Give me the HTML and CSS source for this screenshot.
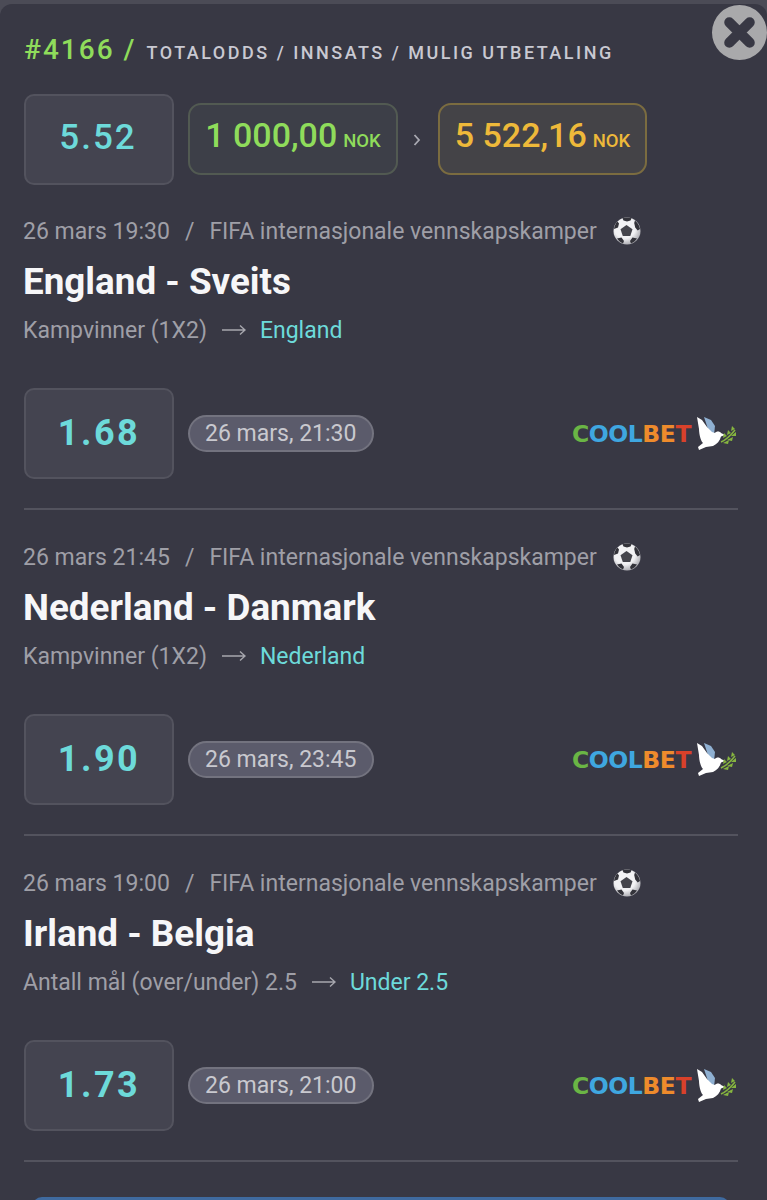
FILE: index.html
```html
<!DOCTYPE html>
<html lang="en">
<head>
    <meta charset="UTF-8">
    <meta name="viewport" content="width=device-width, initial-scale=1.0">
    <title>Kupong #4166</title>
    <link rel="stylesheet" href="styles.css">
</head>
<body>
    <svg class="defs" width="0" height="0">
        <defs>
            <radialGradient id="ball-shade" cx="42%" cy="38%" r="65%">
                <stop offset="0.600" stop-color="#f2f2f4"/>
                <stop offset="1" stop-color="#a8a8ae"/>
            </radialGradient>
            <symbol id="ball" viewBox="0 0 28 28">
                <circle cx="14" cy="14" r="13.500" fill="url(#ball-shade)"/>
                <path d="M13.500 8l6 4.200-2.200 6.800h-7.500l-2.300-6.800z" fill="#45454c"/>
                <path d="M9.500 1.200c3-.9 6-.9 9 0l-1 2.300-3.500 1-3.500-1zM22 3.500c2.500 2 4.500 5 5 8.500l-2.300 1.500-2.500-3-1-4.500zM24 21.500c-1.500 2.300-3.500 4-6 5l-1-2.500 2.500-3.500zM4 21.500c1.500 2.300 3.500 4 6 5l1-2.500-2.500-3.500zM1 12c.3-3 1.500-5.500 3.500-7.500l1.500 2-1 4z" fill="#33333a"/>
            </symbol>
            <symbol id="dove" viewBox="0 0 40 34">
                <path d="M8 0l7 3 4 6-1 9-6-6z" fill="#8fb0d2"/>
                <path d="M1 0l5 3 5 7 5 5 3 1c1-2 5-2 6 0l4 2-4 1.500c-1 4.500-4 7.500-8 9.500l-7 1-7 3-1-3 5-4c-3-3-4-11-4-14z" fill="#fff"/>
                <path d="M25 25c5-2 10-7 14-12" stroke="#86b53f" stroke-width="1.500" fill="none"/>
                <path d="M27 21l1-5 3 3zM31 18l1-5 3 3zM35 14l1-5 3 3zM27 26l6-3-1 4zM31 23l6-3-1 4zM35 19l5-4v4z" fill="#86b53f"/>
            </symbol>
            <symbol id="long-arrow" viewBox="0 0 24 12">
                <path d="M0 6h23M18 1.500L23 6l-5 4.500" fill="none" stroke="#a6a6ad" stroke-width="1.400"/>
            </symbol>
        </defs>
    </svg>

    <div class="panel">
        <button class="close-btn" aria-label="Lukk">
            <svg viewBox="0 0 54 54" width="55" height="55">
                <path d="M17 17l20 20M37 17L17 37" stroke="#383844" stroke-width="10" stroke-linecap="round"/>
            </svg>
        </button>

        <div class="slip-head">
            <span class="slip-id">#4166 /</span>
            <span class="slip-labels">TOTALODDS / INNSATS / MULIG UTBETALING</span>
        </div>

        <div class="totals">
            <div class="odds-box">5.52</div>
            <div class="amount stake">1 000,00<small>NOK</small></div>
            <svg class="arrow" viewBox="0 0 8 12" width="8" height="12"><path d="M1.500 1l4.500 5-4.500 5" fill="none" stroke="#a9a9b2" stroke-width="1.800"/></svg>
            <div class="amount payout">5 522,16<small>NOK</small></div>
        </div>

        <div class="match">
            <div class="meta">
                <span>26 mars 19:30</span><span class="sep">/</span><span>FIFA internasjonale vennskapskamper</span>
                <svg class="ball"><use href="#ball"/></svg>
            </div>
            <h2>England - Sveits</h2>
            <div class="bet">Kampvinner (1X2)<svg class="to"><use href="#long-arrow"/></svg><span class="pick">England</span></div>
            <div class="match-foot">
                <div class="odds-box bold">1.68</div>
                <div class="kick">26 mars, 21:30</div>
                <div class="logo"><span class="g">C</span><span class="b">OOL</span><span class="o">BE</span><span class="r">T</span><svg class="dove"><use href="#dove"/></svg></div>
            </div>
        </div>

        <div class="match">
            <div class="meta">
                <span>26 mars 21:45</span><span class="sep">/</span><span>FIFA internasjonale vennskapskamper</span>
                <svg class="ball"><use href="#ball"/></svg>
            </div>
            <h2>Nederland - Danmark</h2>
            <div class="bet">Kampvinner (1X2)<svg class="to"><use href="#long-arrow"/></svg><span class="pick">Nederland</span></div>
            <div class="match-foot">
                <div class="odds-box bold">1.90</div>
                <div class="kick">26 mars, 23:45</div>
                <div class="logo"><span class="g">C</span><span class="b">OOL</span><span class="o">BE</span><span class="r">T</span><svg class="dove"><use href="#dove"/></svg></div>
            </div>
        </div>

        <div class="match">
            <div class="meta">
                <span>26 mars 19:00</span><span class="sep">/</span><span>FIFA internasjonale vennskapskamper</span>
                <svg class="ball"><use href="#ball"/></svg>
            </div>
            <h2>Irland - Belgia</h2>
            <div class="bet">Antall mål (over/under) 2.5<svg class="to"><use href="#long-arrow"/></svg><span class="pick">Under 2.5</span></div>
            <div class="match-foot">
                <div class="odds-box bold">1.73</div>
                <div class="kick">26 mars, 21:00</div>
                <div class="logo"><span class="g">C</span><span class="b">OOL</span><span class="o">BE</span><span class="r">T</span><svg class="dove"><use href="#dove"/></svg></div>
            </div>
        </div>

        <div class="blue-btn"></div>
    </div>
</body>
</html>
```

FILE: styles.css
```css
* {
    margin: 0;
    padding: 0;
    box-sizing: border-box;
}

html, body {
    height: 1200px;
    overflow: hidden;
}

body {
    font-family: Roboto, Arial, sans-serif;
    background-color: #4b4b56;
    color: #a6a6ad;
    padding-top: 4px;
}

.defs {
    display: block;
    height: 0;
}

.panel {
    position: relative;
    height: 1196px;
    padding: 29px 29px 0 24px;
    background-color: #383844;
    border-radius: 12px 12px 0 0;
}

.close-btn {
    position: absolute;
    top: 1px;
    right: 0;
    width: 55px;
    height: 55px;
    border: none;
    border-radius: 50%;
    background-color: #a9a9ab;
}

.close-btn svg {
    display: block;
}

.slip-head {
    display: flex;
    align-items: baseline;
    height: 34px;
}

.slip-id {
    font-size: 28px;
    font-weight: 500;
    letter-spacing: 2px;
    color: #8fdc5b;
}

.slip-labels {
    margin-left: 10px;
    font-size: 18px;
    font-weight: 500;
    letter-spacing: 2.500px;
    color: #c9c9d2;
}

.totals {
    display: flex;
    align-items: center;
    margin-top: 27px;
}

.odds-box {
    display: flex;
    align-items: center;
    justify-content: center;
    flex: none;
    width: 150px;
    height: 91px;
    padding: 0 2px 4px 0;
    background-color: #444450;
    border: 2px solid #53535e;
    border-radius: 10px;
    font-size: 35px;
    font-weight: 500;
    letter-spacing: 2px;
    color: #6ddada;
}

.odds-box.bold {
    padding: 0 0 2px;
    font-size: 36px;
    font-weight: 700;
    letter-spacing: 2.500px;
}

.amount {
    display: flex;
    align-items: baseline;
    justify-content: center;
    height: 72px;
    padding-top: 10px;
    margin: 0 0 1px 14px;
    border: 2px solid;
    border-radius: 13px;
    font-size: 34px;
    font-weight: 500;
}

.amount small {
    margin-left: 6px;
    font-size: 18.500px;
    font-weight: 500;
}

.stake {
    width: 210px;
    color: #8fdc5b;
    background-color: #3d3f48;
    border-color: #525a52;
}

.payout {
    width: 209px;
    margin-left: 0;
    color: #eeb93a;
    background-color: #444347;
    border-color: #7b6c40;
}

.arrow {
    margin: 0 17px 0 15px;
}

.match {
    height: 326px;
    border-bottom: 2px solid #53535e;
    padding-top: 33px;
}

.totals + .match {
    height: 325px;
    padding-top: 32px;
}

.meta {
    display: flex;
    align-items: center;
    height: 28px;
    margin-left: -1px;
    font-size: 23px;
    color: #9f9fa7;
}

.sep {
    margin: 0 15px;
}

.ball {
    width: 28px;
    height: 28px;
    margin-left: 16px;
}

h2 {
    margin: 15px 0 0 -1px;
    height: 44px;
    line-height: 44px;
    font-size: 36.800px;
    font-weight: 700;
    color: #f6f6f8;
}

.bet {
    display: flex;
    align-items: center;
    margin: 12px 0 0 -1px;
    height: 28px;
    font-size: 23px;
    color: #9f9fa7;
}

.to {
    width: 24px;
    height: 12px;
    margin: 0 14px 0 15px;
}

.pick {
    color: #6ddada;
}

.match-foot {
    display: flex;
    align-items: center;
    margin-top: 44px;
}

.kick {
    margin: 0 0 1px 14px;
    height: 37px;
    line-height: 33px;
    padding: 0 16px 0 15px;
    background-color: #5b5b6b;
    border: 2px solid #73737f;
    border-radius: 19px;
    font-size: 23px;
    color: #c9c9cf;
}

.logo {
    display: flex;
    align-items: center;
    margin-left: auto;
    margin-right: 2px;
    font-family: "DejaVu Sans", sans-serif;
    font-size: 23.500px;
    font-weight: 700;
    letter-spacing: -0.450px;
}

.logo .g { color: #6ab545; }
.logo .b { color: #3fa7e0; }
.logo .o { color: #ee8b2c; }
.logo .r { color: #d9412a; }

.dove {
    width: 40px;
    height: 34px;
    margin-left: 5px;
}

.blue-btn {
    height: 40px;
    margin: 35px 8px 0;
    background-color: #3f6a9f;
    border-radius: 10px 10px 0 0;
}
```
